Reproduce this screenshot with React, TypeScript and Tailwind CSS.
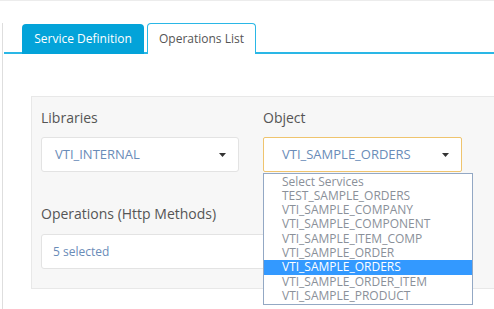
const items = [
  "Select Services",
  "TEST_SAMPLE_ORDERS",
  "VTI_SAMPLE_COMPANY",
  "VTI_SAMPLE_COMPONENT",
  "VTI_SAMPLE_ITEM_COMP",
  "VTI_SAMPLE_ORDER",
  "VTI_SAMPLE_ORDERS",
  "VTI_SAMPLE_ORDER_ITEM",
  "VTI_SAMPLE_PRODUCT",
];

function Caret() {
  return (
    <svg width="7" height="4" viewBox="0 0 7 4" className="shrink-0">
      <path d="M0 0h7L3.5 4z" fill="#333" />
    </svg>
  );
}

export default function App() {
  const selected = "VTI_SAMPLE_ORDERS";
  return (
    <div
      className="h-[309px] w-full overflow-hidden border-t border-[#ececec] bg-white"
      style={{ fontFamily: '"Open Sans", "Noto Sans", sans-serif' }}
    >
      <div className="ml-[2px] h-full border-l border-[#dedede]">
        {/* tabs */}
        <div className="ml-[1px] mt-[22px] flex h-[31px] items-end gap-[3px] border-b-2 border-[#2ab7e6] pl-[18px]">
          <div className="-mb-[2px] flex h-[30px] w-[122px] items-center justify-center rounded-t-[4px] bg-[#03a3d9] text-[12px] text-white">
            Service Definition
          </div>
          <div className="-mb-[2px] flex h-[31px] w-[109px] items-center justify-center rounded-t-[4px] border border-b-0 border-[#2ab7e6] bg-white text-[12px] text-[#555]">
            Operations List
          </div>
        </div>

        {/* panel */}
        <div className="ml-[28px] mt-[42px] h-[193px] w-[480px] border border-[#e8e8e8] bg-[#f7f7f7] pl-[9px] pt-[11px]">
          <div className="flex w-[421px] gap-[24px]">
            <div className="w-[198px]">
              <div className="text-[14px] leading-[20px] text-[#555]">Libraries</div>
              <div className="mt-[9px] flex h-[35px] items-center justify-between rounded-[3px] border border-[#e3e3e3] bg-white pl-[13px] pr-[12px] text-[13px] text-[#6a8cb8]">
                <span>VTI_INTERNAL</span>
                <Caret />
              </div>
            </div>
            <div className="relative w-[199px]">
              <div className="text-[14px] leading-[20px] text-[#555]">Object</div>
              <div className="mt-[9px] flex h-[35px] items-center justify-between rounded-[2px] border border-[#efc46e] bg-white pl-[18px] pr-[12px] text-[13px] text-[#6a8cb8]">
                <span>{selected}</span>
                <Caret />
              </div>
              <div className="absolute left-0 top-[65px] z-10 w-[210px] border border-[#93a8c4] bg-white py-[0.5px]">
                {items.map((it) => (
                  <div
                    key={it}
                    className={
                      "h-[14.33px] pl-[18px] text-[12px] leading-[14.33px] " +
                      (it === selected ? "bg-[#3399ff] text-white" : "text-[#8a9099]")
                    }
                  >
                    {it}
                  </div>
                ))}
              </div>
            </div>
          </div>

          <div className="mt-[32px] text-[14px] leading-[20px] text-[#555]">Operations (Http Methods)</div>
          <div className="mt-[10px] flex h-[35px] w-[421px] items-center rounded-[3px] border border-[#e3e3e3] bg-white pl-[11px] text-[12px] text-[#6a8cb8]">
            5 selected
          </div>
        </div>
      </div>
    </div>
  );
}
